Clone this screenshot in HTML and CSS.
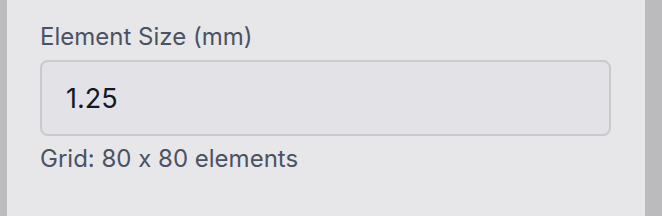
FILE: index.html
```html
<!DOCTYPE html>
<html lang="en">
<head>
    <meta charset="UTF-8">
    <title>Element Size</title>
    <link rel="stylesheet" href="styles.css">
</head>
<body>
    <div class="janela">
        <div class="borda"></div>
        <div class="painel">
            <label class="rotulo" for="tamanho">Element Size (mm)</label>
            <input class="campo" id="tamanho" type="text" value="1.25">
            <p class="info">Grid: 80 x 80 elements</p>
        </div>
        <div class="rolagem"></div>
    </div>
</body>
</html>
```

FILE: styles.css
```css
body {
    margin: 0;
    font-family: Inter, "Noto Sans", sans-serif;
    font-feature-settings: "calt" 0;
    background: #e7e7ea;
}
.janela {
    display: flex;
    height: 216px;
}
.borda {
    width: 7px;
    background-color: #bbbbbe;
}
.rolagem {
    width: 17px;
    background-color: #bbbbbe;
}
.painel {
    flex: 1;
    display: flex;
    flex-direction: column;
    padding: 19px 34px 0 33px;
    background-color: #e7e7ea;
}
.rotulo {
    font-size: 24px;
    line-height: 36px;
    color: #4b5263;
}
.campo {
    margin-top: 5px;
    height: 76px;
    box-sizing: border-box;
    padding: 0 24px;
    border: 2px solid #c9c9ce;
    border-radius: 8px;
    background-color: #e2e2e7;
    font-family: inherit;
    font-feature-settings: "calt" 0;
    font-size: 27px;
    color: #111827;
    outline: none;
}
.info {
    margin: 5px 0 0;
    font-size: 24px;
    line-height: 36px;
    color: #4b5263;
}
```
